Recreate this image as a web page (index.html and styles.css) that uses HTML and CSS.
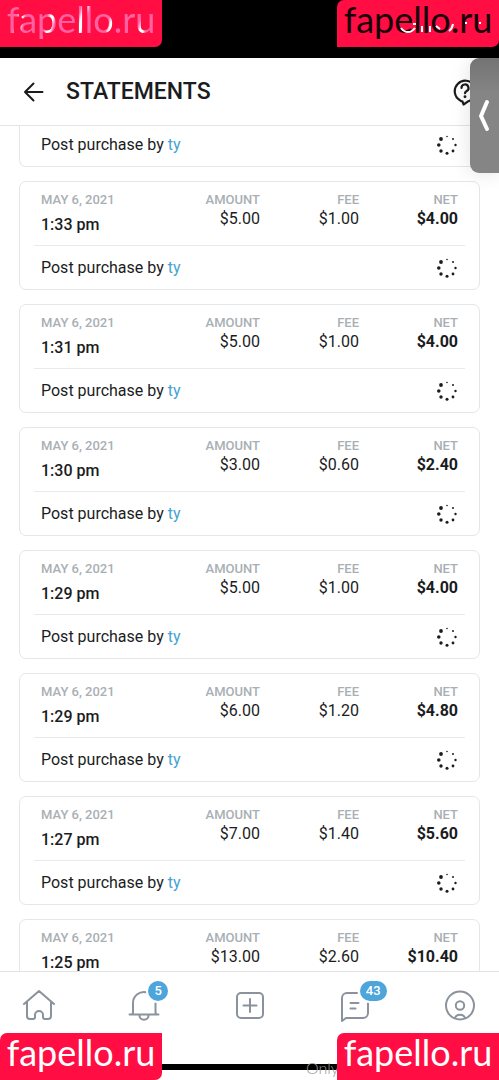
FILE: index.html
```
<!DOCTYPE html>
<html lang="en">
<head>
<meta charset="utf-8">
<meta name="viewport" content="width=device-width, initial-scale=1">
<title>Statements</title>
<link rel="stylesheet" href="styles.css">
</head>
<body>
<svg class="defs" aria-hidden="true">
  <symbol id="spinner" viewBox="0 0 22 22">
    <circle cx="11" cy="2.5" r="0.8"/><circle cx="17" cy="5" r="1"/><circle cx="19.5" cy="11" r="1.2"/><circle cx="17" cy="17" r="1.4"/><circle cx="11" cy="19.3" r="1.5"/><circle cx="5" cy="17" r="1.7"/><circle cx="2.8" cy="11" r="1.8"/><circle cx="5" cy="5" r="1.9"/>
  </symbol>
</svg>
<div class="app">
  <div class="status"></div>
  <header class="header">
    <button class="icon-button" aria-label="Back"><svg width="22" height="22" viewBox="0 0 22 22" fill="none" stroke="#1b1c1e" stroke-width="2" stroke-linecap="round" stroke-linejoin="round"><path d="M19.500 11H2M10.500 2.500L2 11l8.500 8.500"/></svg></button>
    <h1 class="title">STATEMENTS</h1>
    <button class="icon-button help" aria-label="Help"><svg width="26" height="28" viewBox="0 0 26 28" fill="none" stroke="#1b1c1e" stroke-width="2.200" stroke-linecap="round" stroke-linejoin="round"><path d="M9.500 23.500l1 3 5-3.300A10.500 10.500 0 1 0 7 22.300q1.500 1 2.500 1.200"/><path d="M8.500 10a3.500 3.500 0 1 1 5.200 3c-1.200.7-1.700 1.200-1.700 2.200"/><path d="M12 18.600v.2" stroke-width="2.800"/></svg></button>
  </header>
  <main class="list">
    <article class="card continued">
      <div class="detail"><span>Post purchase by <a href="#">ty</a></span><svg class="spinner"><use href="#spinner"/></svg></div>
    </article>
    <article class="card">
      <div class="summary"><div class="when"><span class="label">MAY 6, 2021</span><span class="time">1:33 pm</span></div><div class="money"><span class="label">AMOUNT</span><span>$5.00</span></div><div class="money"><span class="label">FEE</span><span>$1.00</span></div><div class="money"><span class="label">NET</span><b>$4.00</b></div></div>
      <div class="detail"><span>Post purchase by <a href="#">ty</a></span><svg class="spinner"><use href="#spinner"/></svg></div>
    </article>
    <article class="card">
      <div class="summary"><div class="when"><span class="label">MAY 6, 2021</span><span class="time">1:31 pm</span></div><div class="money"><span class="label">AMOUNT</span><span>$5.00</span></div><div class="money"><span class="label">FEE</span><span>$1.00</span></div><div class="money"><span class="label">NET</span><b>$4.00</b></div></div>
      <div class="detail"><span>Post purchase by <a href="#">ty</a></span><svg class="spinner"><use href="#spinner"/></svg></div>
    </article>
    <article class="card">
      <div class="summary"><div class="when"><span class="label">MAY 6, 2021</span><span class="time">1:30 pm</span></div><div class="money"><span class="label">AMOUNT</span><span>$3.00</span></div><div class="money"><span class="label">FEE</span><span>$0.60</span></div><div class="money"><span class="label">NET</span><b>$2.40</b></div></div>
      <div class="detail"><span>Post purchase by <a href="#">ty</a></span><svg class="spinner"><use href="#spinner"/></svg></div>
    </article>
    <article class="card">
      <div class="summary"><div class="when"><span class="label">MAY 6, 2021</span><span class="time">1:29 pm</span></div><div class="money"><span class="label">AMOUNT</span><span>$5.00</span></div><div class="money"><span class="label">FEE</span><span>$1.00</span></div><div class="money"><span class="label">NET</span><b>$4.00</b></div></div>
      <div class="detail"><span>Post purchase by <a href="#">ty</a></span><svg class="spinner"><use href="#spinner"/></svg></div>
    </article>
    <article class="card">
      <div class="summary"><div class="when"><span class="label">MAY 6, 2021</span><span class="time">1:29 pm</span></div><div class="money"><span class="label">AMOUNT</span><span>$6.00</span></div><div class="money"><span class="label">FEE</span><span>$1.20</span></div><div class="money"><span class="label">NET</span><b>$4.80</b></div></div>
      <div class="detail"><span>Post purchase by <a href="#">ty</a></span><svg class="spinner"><use href="#spinner"/></svg></div>
    </article>
    <article class="card">
      <div class="summary"><div class="when"><span class="label">MAY 6, 2021</span><span class="time">1:27 pm</span></div><div class="money"><span class="label">AMOUNT</span><span>$7.00</span></div><div class="money"><span class="label">FEE</span><span>$1.40</span></div><div class="money"><span class="label">NET</span><b>$5.60</b></div></div>
      <div class="detail"><span>Post purchase by <a href="#">ty</a></span><svg class="spinner"><use href="#spinner"/></svg></div>
    </article>
    <article class="card">
      <div class="summary"><div class="when"><span class="label">MAY 6, 2021</span><span class="time">1:25 pm</span></div><div class="money"><span class="label">AMOUNT</span><span>$13.00</span></div><div class="money"><span class="label">FEE</span><span>$2.60</span></div><div class="money"><span class="label">NET</span><b>$10.40</b></div></div>
    </article>
  </main>
  <nav class="nav">
    <a href="#" aria-label="Home"><svg width="34" height="34" viewBox="0 0 34 34"><path d="M2 16L17 3l15 13M5 14v14a3 3 0 0 0 3 3h3a2 2 0 0 0 2-2v-2a4 4 0 0 1 8 0v2a2 2 0 0 0 2 2h3a3 3 0 0 0 3-3V14"/></svg></a>
    <a href="#" aria-label="Notifications"><svg width="34" height="34" viewBox="0 0 34 34"><path d="M19 4.200A11 11 0 0 0 6 15v9q0 2.500-2 2.500M2.500 26.500h29M30 26.500q-1.500 0-1.500-2.500v-9M12.500 27.500a4.500 4.200 0 0 0 9 0"/></svg><span class="badge">5</span></a>
    <a href="#" aria-label="New post"><svg width="34" height="34" viewBox="0 0 34 34"><rect x="4" y="5" width="26" height="25" rx="4"/><path d="M17 11v13M10.500 17.500h13"/></svg></a>
    <a href="#" aria-label="Messages"><svg width="34" height="34" viewBox="0 0 34 34"><path d="M19 5H9a5 5 0 0 0-5 5v23l4-3h17a5 5 0 0 0 5-5V15M12.500 15h8M12.500 20.500h5"/></svg><span class="badge wide">43</span></a>
    <a href="#" aria-label="Profile"><svg width="34" height="34" viewBox="0 0 34 34"><circle cx="17" cy="17.500" r="14"/><circle cx="17" cy="17.500" r="4.200"/><path d="M12 30a5.200 4.500 0 0 1 10 0"/></svg></a>
  </nav>
  <footer class="bottom"><div class="home-bar"></div><span class="caption">Only</span></footer>
  <button class="drawer" aria-label="Open panel"><svg width="14" height="36" viewBox="0 0 14 36" fill="none" stroke="#fff" stroke-width="4" stroke-linecap="round" stroke-linejoin="round"><path d="M9 4L3 18l6 13"/></svg></button>
  <div class="mark top left"><span>fapello.ru</span></div>
  <div class="mark top right"><span>fapello.ru</span><svg class="glints" width="162" height="47" viewBox="0 0 162 47" fill="none" stroke="#fff" stroke-width="2"><path d="M64 28q3 4 7 4t7-4M76 24h3M85 26v6M93 26v6M99 26l4 3M112 31q3-2 4-7M128 23h2M142 23h2"/></svg></div>
  <div class="mark bottom-mark left"><span>fapello.ru</span></div>
  <div class="mark bottom-mark right"><span>fapello.ru</span></div>
</div>
</body>
</html>
```
FILE: styles.css
```
* { box-sizing: border-box; }
body { margin: 0; background: #fff; color: #1b1c1e; font-family: Roboto, "Liberation Sans", sans-serif; font-size: 16px; line-height: 20px; }
button { border: 0; padding: 0; background: none; }
a { color: #45a3d3; text-decoration: none; }
.defs { position: absolute; width: 0; height: 0; }
.app { position: relative; display: flex; flex-direction: column; height: 100vh; overflow: hidden; }
.status { flex: none; height: 58px; background: #000; }
.header { flex: none; display: flex; align-items: center; height: 68px; padding: 1px 20px 0 23px; border-bottom: 1px solid #e2e4e6; }
.icon-button { display: flex; }
.title { margin: 0 0 0 21px; font-size: 23px; line-height: 28px; font-weight: 500; }
.help { margin-left: auto; }
.list { flex: 1; min-height: 0; overflow: hidden; display: flex; flex-direction: column; gap: 14px; padding: 0 19px; }
.card { flex: none; border: 1px solid #e4e6e8; border-radius: 7px; padding: 0 14px; }
.continued { border-top: 0; border-radius: 0 0 7px 7px; }
.continued .detail { height: 40px; padding-bottom: 2px; }
.summary { display: grid; grid-template-columns: 1fr 99px 99px 99px; height: 64px; padding: 8px 7px 0; border-bottom: 1px solid #e8eaeb; }
.when, .money { display: flex; flex-direction: column; }
.when { gap: 5px; }
.money { text-align: right; }
.label { font-size: 13px; font-weight: 500; color: #a9afb5; }
.money .label { line-height: 19px; }
.time { font-weight: 500; }
.detail { display: flex; justify-content: space-between; align-items: center; height: 43px; padding: 0 7px; }
.spinner { width: 22px; height: 22px; fill: #1b1c1e; }
.nav { flex: none; display: flex; justify-content: space-between; align-items: center; height: 70px; padding: 0 22px 3px; border-top: 1px solid #e0e2e4; }
.nav a { position: relative; display: flex; }
.nav svg { fill: none; stroke: #8a939d; stroke-width: 2; stroke-linecap: round; stroke-linejoin: round; }
.nav .badge { position: absolute; left: 21px; top: -7px; min-width: 20px; height: 20px; border-radius: 10px; background: #4da5dc; color: #fff; font-size: 13px; font-weight: 500; text-align: center; box-shadow: 0 0 0 2px #fff; }
.nav .wide { width: 27px; left: 22px; }
.bottom { flex: none; position: relative; height: 39px; padding-top: 23px; }
.home-bar { height: 6px; background: #000; }
.caption { position: absolute; left: 306px; top: 17px; color: #999; font-family: Lato, sans-serif; font-weight: 300; }
.drawer { position: absolute; right: 0; top: 58px; display: flex; align-items: center; justify-content: center; width: 29px; height: 115px; border-radius: 9px 0 0 9px; background: linear-gradient(#737373, #858585 30%); box-shadow: 0 0 20px rgba(0, 0, 0, .12); }
.mark { position: absolute; width: 162px; height: 47px; background: #ff0d43; color: #fff; font-family: Lato, sans-serif; font-size: 36px; line-height: 38px; text-align: center; }
.left { left: 0; }
.right { right: 0; }
.top { top: 0; }
.bottom-mark { bottom: 0; }
.top.left { border-radius: 0 0 7px 0; }
.top.right { border-radius: 7px 0 7px 0; color: #16000a; }
.bottom-mark.left { border-radius: 7px 0 7px 0; }
.bottom-mark.right { border-radius: 7px 0 0 0; }
.top.left span { background: repeating-linear-gradient(105deg, #ff62a2 0 14px, #fff 17px 20px, #ff62a2 23px 30px); background-clip: text; -webkit-background-clip: text; color: transparent; }
.glints { position: absolute; left: 0; top: 0; }
```
